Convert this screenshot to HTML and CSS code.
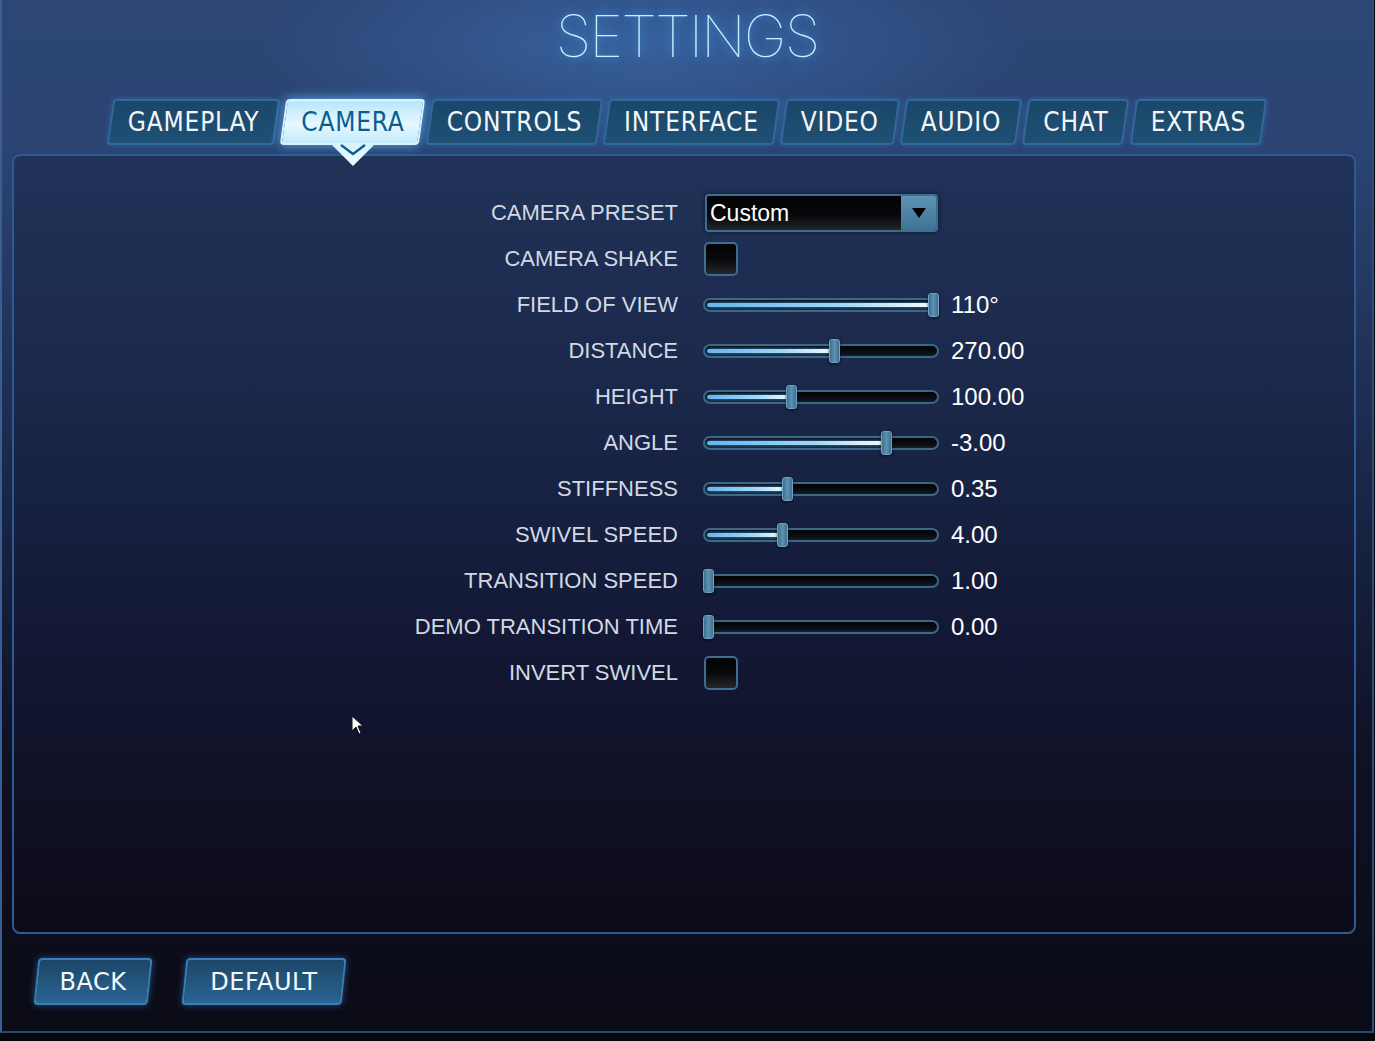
FILE: index.html
```html
<!DOCTYPE html>
<html lang="en">
<head>
    <meta charset="UTF-8">
    <meta name="viewport" content="width=device-width, initial-scale=1.0">
    <title>Settings</title>
    <link rel="stylesheet" href="styles.css">
</head>
<body>
    <div class="screen">
        <h1 class="title">SETTINGS</h1>

        <nav class="tabs">
            <a class="tab">GAMEPLAY</a>
            <a class="tab active">CAMERA</a>
            <a class="tab">CONTROLS</a>
            <a class="tab">INTERFACE</a>
            <a class="tab">VIDEO</a>
            <a class="tab">AUDIO</a>
            <a class="tab">CHAT</a>
            <a class="tab">EXTRAS</a>
        </nav>

        <section class="panel">
            <div class="row">
                <span class="label">CAMERA PRESET</span>
                <div class="control">
                    <div class="select">
                        <span class="select-text">Custom</span>
                        <span class="select-btn">
                            <svg width="16" height="12" viewBox="0 0 16 12"><path d="M1 1h14L8 11z" fill="#000"/></svg>
                        </span>
                    </div>
                </div>
                <span class="value"></span>
            </div>
            <div class="row">
                <span class="label">CAMERA SHAKE</span>
                <div class="control"><span class="check"></span></div>
                <span class="value"></span>
            </div>
            <div class="row">
                <span class="label">FIELD OF VIEW</span>
                <div class="control"><div class="slider" style="--v: 1"><span class="fill"></span><span class="thumb"></span></div></div>
                <span class="value">110°</span>
            </div>
            <div class="row">
                <span class="label">DISTANCE</span>
                <div class="control"><div class="slider" style="--v: 0.56"><span class="fill"></span><span class="thumb"></span></div></div>
                <span class="value">270.00</span>
            </div>
            <div class="row">
                <span class="label">HEIGHT</span>
                <div class="control"><div class="slider" style="--v: 0.37"><span class="fill"></span><span class="thumb"></span></div></div>
                <span class="value">100.00</span>
            </div>
            <div class="row">
                <span class="label">ANGLE</span>
                <div class="control"><div class="slider" style="--v: 0.79"><span class="fill"></span><span class="thumb"></span></div></div>
                <span class="value">-3.00</span>
            </div>
            <div class="row">
                <span class="label">STIFFNESS</span>
                <div class="control"><div class="slider" style="--v: 0.35"><span class="fill"></span><span class="thumb"></span></div></div>
                <span class="value">0.35</span>
            </div>
            <div class="row">
                <span class="label">SWIVEL SPEED</span>
                <div class="control"><div class="slider" style="--v: 0.33"><span class="fill"></span><span class="thumb"></span></div></div>
                <span class="value">4.00</span>
            </div>
            <div class="row">
                <span class="label">TRANSITION SPEED</span>
                <div class="control"><div class="slider" style="--v: 0"><span class="fill"></span><span class="thumb"></span></div></div>
                <span class="value">1.00</span>
            </div>
            <div class="row">
                <span class="label">DEMO TRANSITION TIME</span>
                <div class="control"><div class="slider" style="--v: 0"><span class="fill"></span><span class="thumb"></span></div></div>
                <span class="value">0.00</span>
            </div>
            <div class="row">
                <span class="label">INVERT SWIVEL</span>
                <div class="control"><span class="check"></span></div>
                <span class="value"></span>
            </div>
        </section>

        <footer class="actions">
            <a class="btn back">BACK</a>
            <a class="btn">DEFAULT</a>
        </footer>

        <!-- mouse pointer -->
        <svg class="cursor" width="13" height="20" viewBox="0 0 13 20">
            <path d="M1 1v15l4-4 3 7 2-1-3-7h5z" fill="#fff" stroke="#111" stroke-width="1"/>
        </svg>
    </div>
</body>
</html>
```

FILE: styles.css
```css
body {
    margin: 0;
    background-color: #06070c;
    font-family: "Liberation Sans", Arial, sans-serif;
}

.screen {
    position: relative;
    box-sizing: border-box;
    width: 1374px;
    height: 1033px;
    border-left: 2px solid #3a5d92;
    border-right: 2px solid #2c4c7c;
    border-bottom: 2px solid #244a74;
    background:
        radial-gradient(ellipse 380px 110px at 640px 45px, rgba(72, 132, 204, 0.45), rgba(72, 132, 204, 0) 100%),
        linear-gradient(#2c4676 0, #2b4473 150px, #1a2748 480px, #0f1124 760px, #0b0b16 1033px);
    display: flex;
    flex-direction: column;
}

/* heading */
.title {
    margin: 0;
    height: 84px;
    line-height: 72px;
    text-align: center;
    font-family: Inter, "DejaVu Sans", sans-serif;
    font-weight: 100;
    font-size: 58px;
    letter-spacing: -2px;
    color: #c6f1ff;
    text-shadow: 0 0 8px rgba(80, 170, 255, 0.9), 0 0 20px rgba(60, 140, 240, 0.6);
}

/* tab strip */
.tabs {
    display: flex;
    justify-content: center;
    gap: 6px;
    margin-top: 15px;
    height: 46px;
}

.tab {
    position: relative;
    z-index: 1;
    display: flex;
    align-items: center;
    padding: 0 18px;
    font-family: "DejaVu Sans Condensed", "DejaVu Sans", sans-serif;
    font-stretch: condensed;
    font-size: 26px;
    letter-spacing: 0.8px;
    color: #f2f6fa;
}

.tab::before {
    content: "";
    position: absolute;
    inset: 0;
    z-index: -1;
    border: 2px solid #2f6a9a;
    border-radius: 4px;
    background: linear-gradient(#1b4769, #1e5075);
    transform: skewX(-8deg);
    box-shadow: 0 0 6px rgba(60, 150, 230, 0.35);
}

.tab.active {
    color: #0b5d8e;
}

.tab.active::before {
    border-color: #d8f5ff;
    background: linear-gradient(#b8e6fb, #e6f8ff 55%, #c4eafc);
    box-shadow: 0 0 12px rgba(90, 190, 255, 0.9);
}

/* pointer below the active tab */
.tab.active::after {
    content: "";
    position: absolute;
    left: 50%;
    bottom: -21px;
    width: 44px;
    height: 22px;
    margin-left: -22px;
    background:
        url("data:image/svg+xml,%3Csvg xmlns='http://www.w3.org/2000/svg' width='44' height='22'%3E%3Cpath d='M10 1l12 9 12-9' fill='none' stroke='%230b5d8e' stroke-width='2.2'/%3E%3C/svg%3E") no-repeat,
        linear-gradient(#d4f3ff, #f4fcff);
    clip-path: polygon(0 0, 100% 0, 50% 100%);
    filter: drop-shadow(0 0 6px rgba(90, 190, 255, 0.9));
}

/* main panel */
.panel {
    box-sizing: border-box;
    height: 780px;
    margin: 9px 16px 0 10px;
    padding-top: 34px;
    border: 2px solid #2c5a94;
    border-radius: 8px;
    background: linear-gradient(#213359 0, #1a2749 250px, #121733 500px, #0e0e1f 700px, #0d0b18 100%);
}

.row {
    display: grid;
    grid-template-columns: 664px 273px auto;
    align-items: center;
    height: 46px;
}

.label {
    text-align: right;
    font-size: 22px;
    color: #d2d9e4;
}

.control {
    padding-left: 25px;
}

.value {
    font-size: 24px;
    color: #ffffff;
}

/* dropdown */
.select {
    box-sizing: border-box;
    display: flex;
    height: 38px;
    width: 233px;
    margin-left: 2px;
    border: 2px solid #3d6d8f;
    border-radius: 4px;
    overflow: hidden;
    box-shadow: 0 0 6px rgba(0, 0, 0, 0.5);
}

.select-text {
    flex: 1;
    padding-left: 3px;
    line-height: 34px;
    font-size: 23px;
    color: #fff;
    background: linear-gradient(#020304, #05070a 55%, #242526);
}

.select-btn {
    width: 35px;
    display: flex;
    align-items: center;
    justify-content: center;
    background: linear-gradient(#5e93b6, #3f7396);
}

/* checkbox */
.check {
    display: block;
    box-sizing: border-box;
    width: 34px;
    height: 34px;
    margin-left: 1px;
    border: 2px solid #3d6d8f;
    border-radius: 5px;
    background: linear-gradient(#020304, #07090c 50%, #26272a);
}

/* slider */
.slider {
    position: relative;
    height: 26px;
    width: 236px;
}

.slider::before {
    content: "";
    position: absolute;
    left: 0;
    right: 0;
    top: 6px;
    height: 14px;
    box-sizing: border-box;
    border: 2px solid #3b6887;
    border-radius: 7px;
    background: linear-gradient(#000306, #0b1016 70%, #161d26);
}

.fill {
    position: absolute;
    left: 4px;
    top: 11px;
    height: 4px;
    width: calc(var(--v) * 226px);
    border-radius: 2px;
    background: linear-gradient(90deg, #63b6ee, #9fd8fb 60%, #f4fbff);
    box-shadow: 0 0 4px rgba(90, 180, 255, 0.8);
}

.thumb {
    position: absolute;
    top: 1px;
    left: calc(var(--v) * 225px);
    box-sizing: border-box;
    width: 11px;
    height: 24px;
    border: 1px solid #6fa2c4;
    border-radius: 3px;
    background: linear-gradient(90deg, #3f7191, #5c90b1 50%, #3f7191);
    box-shadow: 0 1px 3px rgba(0, 0, 0, 0.6);
}

/* bottom buttons */
.actions {
    display: flex;
    gap: 34px;
    margin-top: 24px;
    padding-left: 34px;
}

.btn {
    position: relative;
    z-index: 1;
    display: flex;
    align-items: center;
    justify-content: center;
    height: 47px;
    font-family: "DejaVu Sans", sans-serif;
    font-size: 24px;
    letter-spacing: 0.5px;
    color: #f4f8fb;
}

.btn::before {
    content: "";
    position: absolute;
    inset: 0;
    z-index: -1;
    border: 2px solid #3a80b8;
    border-radius: 4px;
    background: linear-gradient(#1c4668, #2a6593);
    transform: skewX(-6deg);
    box-shadow: 0 0 7px rgba(70, 160, 240, 0.45);
}

.btn.back {
    width: 114px;
}

.btn:not(.back) {
    width: 160px;
}

.cursor {
    position: absolute;
    left: 349px;
    top: 715px;
}
```
